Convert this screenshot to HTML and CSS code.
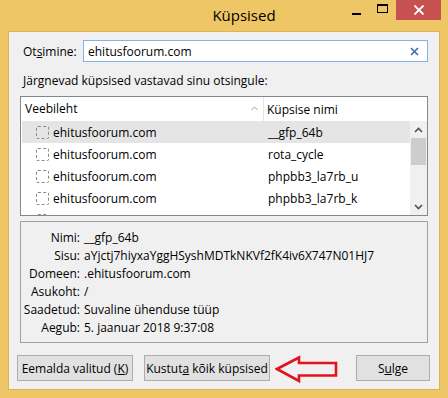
FILE: index.html
```html
<!DOCTYPE html>
<html lang="et">
<head>
<meta charset="utf-8">
<title>Küpsised</title>
<link rel="stylesheet" href="styles.css">
</head>
<body>
<div class="window">
  <div class="titlebar">
    <div class="title">Küpsised</div>
    <div class="controls">
      <div class="ctl min"><span class="min-bar"></span></div>
      <div class="ctl max"><span class="max-box"></span></div>
      <div class="ctl close">
        <svg width="12" height="10" viewBox="0 0 12 10"><path d="M1.5 0.5 L10.5 9.5 M10.5 0.5 L1.5 9.5" stroke="#fff" stroke-width="1.8" fill="none"/></svg>
      </div>
    </div>
  </div>
  <div class="client">
    <div class="search-row">
      <label class="search-label">Ot<u>s</u>imine:</label>
      <div class="search-input">
        <span class="search-text">ehitusfoorum.com</span>
        <svg class="clear" width="9" height="9" viewBox="0 0 9 9"><path d="M1 1 L8 8 M8 1 L1 8" stroke="#3b6ea5" stroke-width="1.6" fill="none"/></svg>
      </div>
    </div>
    <div class="hint">Järgnevad küpsised vastavad sinu otsingule:</div>
    <div class="list">
      <div class="list-main">
        <div class="list-head">
          <div class="col1">Veebileht<span class="sort">
            <svg width="7" height="5" viewBox="0 0 7 5"><path d="M0.5 4 L3.5 1 L6.5 4" stroke="#9a9a9a" stroke-width="1" fill="none"/></svg></span></div>
          <div class="col2">Küpsise nimi</div>
        </div>
        <div class="row selected"><div class="col1"><span class="chk"></span>ehitusfoorum.com</div><div class="col2">__gfp_64b</div></div>
        <div class="row"><div class="col1"><span class="chk"></span>ehitusfoorum.com</div><div class="col2">rota_cycle</div></div>
        <div class="row"><div class="col1"><span class="chk"></span>ehitusfoorum.com</div><div class="col2">phpbb3_la7rb_u</div></div>
        <div class="row"><div class="col1"><span class="chk"></span>ehitusfoorum.com</div><div class="col2">phpbb3_la7rb_k</div></div>
        <div class="row"><div class="col1"><span class="chk"></span></div></div>
      </div>
      <div class="scrollbar">
        <div class="sb-top"></div>
        <div class="sb-btn"><svg width="9" height="6" viewBox="0 0 9 6"><path d="M1 5 L4.5 1.5 L8 5" stroke="#505050" stroke-width="1.6" fill="none"/></svg></div>
        <div class="sb-thumb"></div>
        <div class="sb-track"></div>
        <div class="sb-btn"><svg width="9" height="6" viewBox="0 0 9 6"><path d="M1 1 L4.5 4.5 L8 1" stroke="#505050" stroke-width="1.6" fill="none"/></svg></div>
      </div>
    </div>
    <div class="details">
      <div class="dl">Nimi:</div><div class="dv">__gfp_64b</div>
      <div class="dl">Sisu:</div><div class="dv">aYjctj7hiyxaYggHSyshMDTkNKVf2fK4iv6X747N01HJ7</div>
      <div class="dl">Domeen:</div><div class="dv">.ehitusfoorum.com</div>
      <div class="dl">Asukoht:</div><div class="dv">/</div>
      <div class="dl">Saadetud:</div><div class="dv">Suvaline ühenduse tüüp</div>
      <div class="dl">Aegub:</div><div class="dv">5. jaanuar 2018 9:37:08</div>
    </div>
    <div class="buttons">
      <button class="btn btn-remove">Eemalda valitud (<u>K</u>)</button>
      <button class="btn btn-clear">Kustut<u>a</u> kõik küpsised</button>
      <svg class="arrow" width="66" height="28" viewBox="0 0 66 28"><path d="M2 14 L24 2.5 L24 8 L61 8 L61 20.5 L24 20.5 L24 26 Z" stroke="#e0141e" stroke-width="2.6" fill="none" stroke-linejoin="miter"/></svg>
      <div class="spacer"></div>
      <button class="btn btn-close">S<u>u</u>lge</button>
    </div>
  </div>
</div>
</body>
</html>
```

FILE: styles.css
```css
* { box-sizing: border-box; }
html, body { margin: 0; padding: 0; }
body {
  width: 448px;
  height: 398px;
  overflow: hidden;
  font-family: "Open Sans", "Noto Sans", sans-serif;
  font-size: 12px;
  color: #000;
}
.window {
  width: 448px;
  height: 398px;
  background: #eec665;
  display: flex;
  flex-direction: column;
}
.titlebar {
  height: 31px;
  display: flex;
  position: relative;
}
.title {
  flex: 1;
  padding-left: 145px;
  text-align: center;
  font-size: 15px;
  line-height: 30px;
  color: #000;
}
.controls {
  display: flex;
  align-items: flex-start;
  padding-right: 7px;
}
.ctl {
  height: 21px;
  display: flex;
  align-items: center;
  justify-content: center;
}
.min { width: 26px; }
.min-bar {
  width: 9px; height: 2px; background: #000; margin-top: 6px;
}
.max { width: 27px; }
.max-box {
  width: 11px; height: 9px; border: 1px solid #000; border-top-width: 2px; margin-top: -4px;
}
.close {
  width: 45px;
  height: 20px;
  background: #c75050;
}
.client {
  flex: 1;
  margin: 0 8px 8px 8px;
  background: #f0f0f0;
  border: 1px solid #d9b556;
  padding: 8px 11px 0 11px;
  display: flex;
  flex-direction: column;
}
.search-row {
  display: flex;
  align-items: center;
  height: 22px;
}
.search-label {
  width: 63px;
  padding-left: 3px;
}
.search-input {
  flex: 1;
  height: 22px;
  background: #fff;
  border: 1px solid #7eb4ea;
  display: flex;
  align-items: center;
  padding: 0 8px 0 4px;
}
.search-text { flex: 1; }
.hint {
  margin-top: 10px;
  padding-left: 3px;
  height: 17px;
  line-height: 17px;
}
.list {
  margin-top: 7px;
  height: 120px;
  border: 1px solid #828790;
  background: #fff;
  display: flex;
  overflow: hidden;
}
.list-main { flex: 1; min-width: 0; }
.list-head {
  display: flex;
  height: 24px;
  align-items: center;
}
.list-head .col1 {
  width: 243px;
  padding-left: 4px;
  position: relative;
  height: 24px;
  line-height: 24px;
  border-right: 1px solid #e5e5e5;
}
.sort { position: absolute; right: 5px; top: 0; }
.sort svg { display: block; margin-top: 9px; }
.list-head .col2 { padding-left: 3px; }
.row {
  display: flex;
  height: 22px;
  align-items: center;
  margin-left: 1px;
}
.row.selected { background: #e5e5e5; }
.row .col1 {
  width: 243px;
  display: flex;
  align-items: center;
  padding-left: 14px;
}
.row .col2 { padding-left: 3px; }
.chk {
  width: 13px;
  height: 13px;
  border: 1px dashed #8a8a8a;
  border-radius: 2px;
  margin-right: 4px;
}
.scrollbar {
  width: 17px;
  background: #f0f0f0;
  display: flex;
  flex-direction: column;
}
.sb-top { height: 24px; background: #fff; }
.sb-btn {
  height: 17px;
  display: flex;
  align-items: center;
  justify-content: center;
}
.sb-thumb {
  height: 27px;
  background: #cdcdcd;
  margin: 0 1px;
}
.sb-track { flex: 1; }
.details {
  margin-top: 5px;
  height: 122px;
  border: 1px solid #a0a0a0;
  display: grid;
  grid-template-columns: 59px 1fr;
  grid-auto-rows: 18px;
  align-items: center;
  padding-top: 6px;
  column-gap: 4px;
}
.dl { text-align: right; }
.dv { white-space: nowrap; }
.buttons {
  margin-top: 12px;
  display: flex;
  align-items: center;
  height: 26px;
  margin-left: -3px;
}
.btn {
  font-family: inherit;
  font-size: 12px;
  color: #000;
  height: 26px;
  background: #e1e1e1;
  border: 1px solid #adadad;
  padding: 0;
  margin: 0;
}
.btn-remove { width: 116px; }
.btn-clear { width: 126px; margin-left: 11px; }
.arrow { margin-left: 5px; margin-top: 1px; }
.spacer { flex: 1; }
.btn-close { width: 74px; margin-right: -2px; }
```
